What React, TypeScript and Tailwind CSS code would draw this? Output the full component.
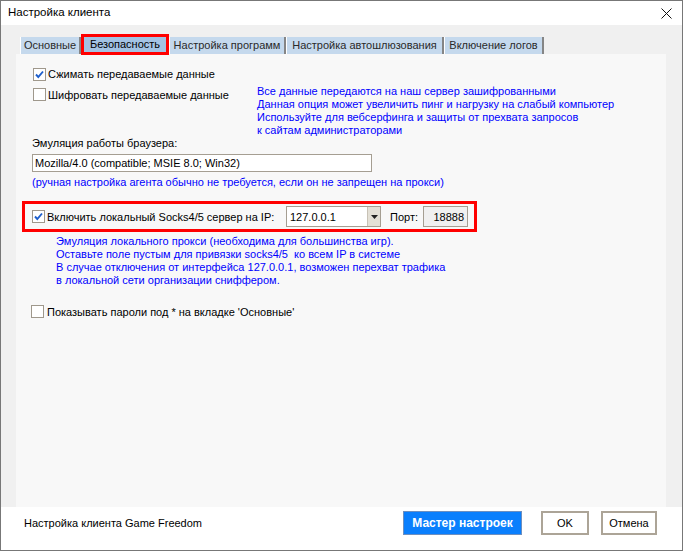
import React from 'react'

function CheckBox({ checked }: { checked?: boolean }) {
  return (
    <div className="w-[13px] h-[13px] shrink-0 border border-[#9f988c] bg-white flex items-center justify-center">
      {checked && (
        <svg width="11" height="11" viewBox="0 0 11 11">
          <path d="M2 5.5 L4.3 8 L9 2.5" fill="none" stroke="#1e5fcc" strokeWidth="1.9" />
        </svg>
      )}
    </div>
  )
}

function Tab({ label, w }: { label: string; w: string }) {
  return (
    <div
      className={`${w} h-[17px] bg-[#c5d9ed] border-l border-l-white border-r-2 border-r-[#858585] flex items-center justify-center text-[#2a2a2a] leading-none`}
    >
      {label}
    </div>
  )
}

export default function App() {
  const mainHint = [
    'Все данные передаются на наш сервер зашифрованными',
    'Данная опция может увеличить пинг и нагрузку на слабый компьютер',
    'Используйте для вебсерфинга и защиты от прехвата запросов',
    'к сайтам администраторами',
  ]
  const socksHint = [
    'Эмуляция локального прокси (необходима для большинства игр).',
    'Оставьте поле пустым для привязки socks4/5  ко всем IP в системе',
    'В случае отключения от интерфейса 127.0.0.1, возможен перехват трафика',
    'в локальной сети организации сниффером.',
  ]

  return (
    <div className="w-[683px] h-[551px] border border-[#777777] bg-white flex flex-col font-['Liberation_Sans',sans-serif] text-[11px] text-black overflow-hidden">
      {/* title bar */}
      <div className="h-[24px] shrink-0 flex items-center justify-between pl-[7px] pr-[10px]">
        <span className="text-[11.5px]">Настройка клиента</span>
        <svg width="11" height="11" viewBox="0 0 11 11">
          <path d="M0.5 0.5 L10.5 10.5 M10.5 0.5 L0.5 10.5" stroke="#111" strokeWidth="1" />
        </svg>
      </div>

      {/* tab control */}
      <div className="h-[482px] shrink-0 bg-[#f0f0f0] flex flex-col">
        <div className="h-[29px] shrink-0 flex items-end pl-[19px]">
          <Tab label="Основные" w="w-[61px]" />
          <div className="relative z-10 w-[88px] h-[21px] -mb-[1px] border-[3px] border-[#ff0000] bg-[#a3c3e3] flex items-center justify-center leading-none">
            Безопасность
          </div>
          <Tab label="Настройка программ" w="w-[117px]" />
          <Tab label="Настройка автошлюзования" w="w-[158px]" />
          <Tab label="Включение логов" w="w-[100px]" />
        </div>

        <div className="ml-[15px] w-[650px] flex-1 bg-[#f8f8f8] pl-[6px] pt-[12px] flex flex-col leading-[12px]">
          <div className="h-[16px] ml-[11px] flex items-center gap-[2px]">
            <CheckBox checked />
            <span>Сжимать передаваемые данные</span>
          </div>

          <div className="mt-[5px] ml-[11px] flex items-start">
            <div className="w-[224px] mt-[1px] h-[13px] flex items-center gap-[2px]">
              <CheckBox />
              <span>Шифровать передаваемые данные</span>
            </div>
            <div className="-mt-[2px] text-[#0000ff] leading-[13px] whitespace-pre">
              {mainHint.map((l) => (
                <div key={l}>{l}</div>
              ))}
            </div>
          </div>

          <div className="ml-[10px]">Эмуляция работы браузера:</div>
          <div className="ml-[10px] mt-[5px] w-[340px] h-[18px] border border-[#a59e92] bg-white flex items-center pl-[2px]">
            Mozilla/4.0 (compatible; MSIE 8.0; Win32)
          </div>
          <div className="ml-[10px] mt-[4px] text-[#0000ff]">
            (ручная настройка агента обычно не требуется, если он не запрещен на прокси)
          </div>

          <div className="mt-[13px] w-[455px] h-[31px] border-[3px] border-[#ff0000] flex items-center pl-[7px]">
            <CheckBox checked />
            <span className="ml-[2px] w-[239px]">Включить локальный Socks4/5 сервер на IP:</span>
            <div className="w-[95px] h-[21px] border border-[#a59e92] bg-white flex items-stretch">
              <span className="flex-1 flex items-center pl-[3px]">127.0.0.1</span>
              <div className="w-[13px] bg-[#e4e0d6] border-l border-[#c8c2b6] flex items-center justify-center">
                <svg width="7" height="4" viewBox="0 0 7 4">
                  <path d="M0 0 H7 L3.5 4 Z" fill="#222" />
                </svg>
              </div>
            </div>
            <span className="ml-[9px] w-[33px]">Порт:</span>
            <div className="w-[45px] h-[21px] border border-[#a59e92] bg-[#f0f0f0] flex items-center justify-end pr-[3px]">
              18888
            </div>
          </div>

          <div className="ml-[34px] mt-[3px] text-[#0000ff] leading-[13px] whitespace-pre">
            {socksHint.map((l) => (
              <div key={l}>{l}</div>
            ))}
          </div>

          <div className="ml-[9px] mt-[18px] h-[13px] flex items-center gap-[3px]">
            <CheckBox />
            <span>Показывать пароли под * на вкладке 'Основные'</span>
          </div>
        </div>
      </div>

      {/* footer */}
      <div className="flex-1 flex items-start pt-[4px] pl-[23px] pr-[25px]">
        <div className="h-[24px] flex items-center">Настройка клиента Game Freedom</div>
        <div className="ml-auto flex items-center">
          <button className="w-[119px] h-[24px] bg-[#0a7ffd] border border-[#6d8fbf] text-white font-bold text-[12px]">
            Мастер настроек
          </button>
          <button className="ml-[19px] w-[48px] h-[24px] bg-white border-2 border-[#aca497]">OK</button>
          <button className="ml-[12px] w-[56px] h-[24px] bg-white border-2 border-[#aca497]">Отмена</button>
        </div>
      </div>
    </div>
  )
}
